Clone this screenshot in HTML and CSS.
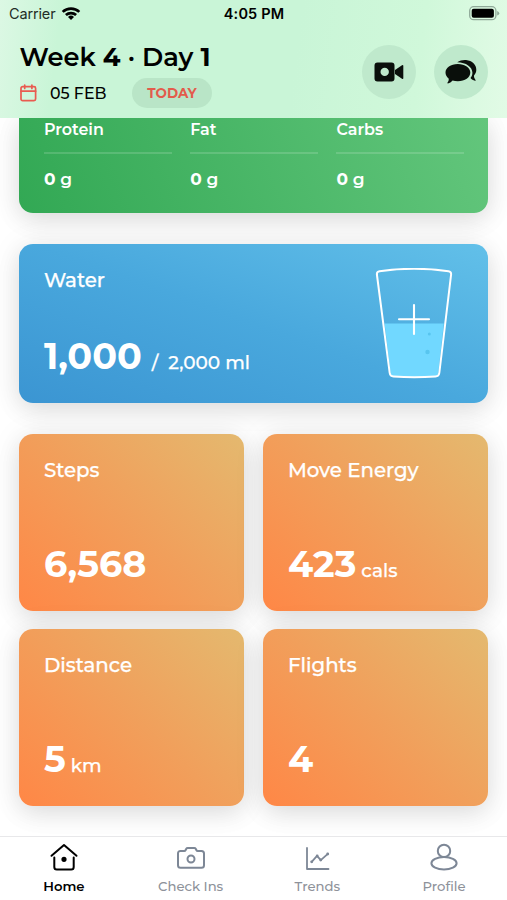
FILE: index.html
```html
<!DOCTYPE html>
<html lang="en">
<head>
<meta charset="utf-8">
<title>Home</title>
<link rel="stylesheet" href="styles.css">
</head>
<body>
<div class="app">
  <header class="header">
    <div class="status">
      <div class="carrier"><span>Carrier</span>
        <svg width="20" height="15" viewBox="0 0 20 15"><g fill="none" stroke="#000" stroke-width="2.7"><path d="M1.7 5.900a12 12 0 0 1 16.600 0"/><path d="M4.900 9.100a7.400 7.400 0 0 1 10.200 0"/></g><path d="M10 14l-3-3a4.300 4.300 0 0 1 6 0z"/></svg>
      </div>
      <time class="clock">4:05 PM</time>
      <svg class="battery" width="31" height="15" viewBox="0 0 31 15"><rect x=".7" y=".7" width="26.2" height="13" rx="4" fill="none" stroke="#8fa998" stroke-width="1.3"/><rect x="2.7" y="2.7" width="22.2" height="9" rx="2" fill="#000"/><path d="M28.2 5v4.600q2-.7 2-2.300t-2-2.300z" fill="#8fa998"/></svg>
    </div>
    <div class="bar">
      <div>
        <h1 class="title">Week <b>4</b> · Day <b>1</b></h1>
        <div class="date-row">
          <svg width="17" height="18" viewBox="0 0 17 18" fill="none" stroke="#e95b50" stroke-width="1.7" stroke-linecap="round"><rect x="1" y="2.700" width="14.600" height="14" rx="1.600"/><path d="M1 7.200h14.600M4.700 1v3.500M11.900 1v3.500"/></svg>
          <span class="date">05 FEB</span>
          <span class="today">TODAY</span>
        </div>
      </div>
      <div class="actions">
        <button class="round" aria-label="Video call"><svg width="30" height="20" viewBox="0 0 30 20" fill="#0a0f0b"><path fill-rule="evenodd" d="M3.500 .5h14a3 3 0 0 1 3 3v13a3 3 0 0 1-3 3h-14a3 3 0 0 1-3-3v-13a3 3 0 0 1 3-3zM10.700 5.700a4.200 4.200 0 1 0 0 8.400a4.200 4.200 0 1 0 0-8.400z"/><path d="M21 8l7-4.700q1.300-.8 1.300.7v12q0 1.500-1.300.7L21 12z"/></svg></button>
        <button class="round" aria-label="Messages"><svg width="32" height="26" viewBox="0 0 32 26" fill="#0a0f0b"><path d="M12.800 5C20 5 25.300 8.700 25.300 13.500S20 22.300 12.800 22.300c-2 0-3.700-.3-5.200-.8-1.300 1.500-3 2.700-4.700 2.900-.6 0-.7-.5-.3-.9 1-1.100 1.400-2.600 1-4C1.700 18 .5 15.900.5 13.500.5 8.700 5.700 5 12.800 5z"/><path d="M12.200 3.300C15 1.600 18 .8 21 1.100c6.200.6 10.500 4.700 10.300 10-.1 2.400-1 4-2.300 5.500-.1 1.600.4 3 1.500 4.300.4.500.1 1-.5.800-1.900-.4-3.400-1.300-4.500-2.700 1.300-1.500 2-3.300 1.900-5.400-.2-5.600-6.100-10.100-15.200-10.300z"/></svg></button>
      </div>
    </div>
  </header>

  <main class="content">
    <section class="card macros">
      <div class="macro"><h3>Protein</h3><p><b>0</b> g</p></div>
      <div class="macro"><h3>Fat</h3><p><b>0</b> g</p></div>
      <div class="macro"><h3>Carbs</h3><p><b>0</b> g</p></div>
    </section>

    <section class="card water">
      <div>
        <h2>Water</h2>
        <p class="value"><b>1,000</b><span class="slash">/</span><span class="goal">2,000 ml</span></p>
      </div>
      <svg width="78" height="112" viewBox="0 0 78 112" fill="none" stroke="#fff" stroke-linecap="round" stroke-linejoin="round"><path d="M9.600 55.500H68.800L63.300 105Q62.800 108.500 59 108.500Q39 110 20 108.500Q16 108.500 15.500 105z" fill="#71d8ff" stroke="none"/><path d="M4.500 3.200Q39 -1.600 73.500 3.200Q76.400 3.600 76.100 6.500L64.300 105Q63.900 108.300 60.500 108.500Q39 110 18.500 108.500Q15.100 108.300 14.700 105L1.900 6.500Q1.600 3.600 4.500 3.200z" stroke-width="2"/><path d="M39 37v29M24 51.300h30" stroke-width="2.100"/><g fill="#58c5ef" stroke="none"><circle cx="54.300" cy="66" r="1.500"/><circle cx="52.500" cy="84" r="2.200"/></g></svg>
    </section>

    <div class="grid">
      <section class="card stat"><h2>Steps</h2><p class="value"><b>6,568</b></p></section>
      <section class="card stat"><h2>Move Energy</h2><p class="value"><b>423</b><span class="unit">cals</span></p></section>
      <section class="card stat"><h2>Distance</h2><p class="value"><b>5</b><span class="unit">km</span></p></section>
      <section class="card stat"><h2>Flights</h2><p class="value"><b>4</b></p></section>
    </div>
  </main>

  <nav class="tabs">
    <a class="tab active"><svg width="28" height="28" viewBox="0 0 28 28"><path d="M1.500 12.800L14 2l12.500 10.800M4.300 14.500v9.500a2.500 2.500 0 0 0 2.500 2.500h14.400a2.500 2.500 0 0 0 2.500-2.500V14.500"/><circle cx="14" cy="16.300" r="1.600" fill="currentColor"/></svg><span>Home</span></a>
    <a class="tab"><svg width="28" height="28" viewBox="0 0 28 28"><path d="M3.500 8h3.700q1 0 1.500-1l.6-1.200q.4-.8 1.500-.8h6.400q1.100 0 1.500.8l.6 1.200q.5 1 1.500 1h3.700q2.500 0 2.500 2.500v11.800q0 2.500-2.500 2.500h-21q-2.500 0-2.500-2.500V10.500Q1 8 3.500 8z"/><circle cx="14" cy="16" r="3.500"/></svg><span>Check Ins</span></a>
    <a class="tab"><svg width="28" height="28" viewBox="0 0 28 28"><path d="M4 5v21h21.500M8.700 18.800l5.300-6 3.800 4.300 7-6.300" stroke-width="1.800"/><g fill="currentColor" stroke="none"><circle cx="8.700" cy="18.800" r="1.400"/><circle cx="14.200" cy="13" r="1.400"/><circle cx="17.700" cy="17" r="1.400"/><circle cx="24.700" cy="11" r="1.400"/></g></svg><span>Trends</span></a>
    <a class="tab"><svg width="28" height="28" viewBox="0 0 28 28"><circle cx="14" cy="7.900" r="6.200"/><ellipse cx="14" cy="20.300" rx="12.600" ry="6.200"/></svg><span>Profile</span></a>
  </nav>
</div>
</body>
</html>
```

FILE: styles.css
```css
* { box-sizing: border-box; }
body { margin: 0; background: #fff; font-family: Montserrat, Inter, "Liberation Sans", sans-serif; }
h1, h2, h3, p { margin: 0; font-weight: 500; }
b { font-weight: 700; }
svg { display: block; flex: none; }
.app { width: 507px; height: 900px; display: flex; flex-direction: column; overflow: hidden; }

.header {
  position: relative; z-index: 2; flex: none; height: 118px;
  background: linear-gradient(97deg, #dcf8e4 0, #c9f5d7 12%, #c9f5d7 58%, #d0f8da 82%, #e2fbe6 100%);
}
.status { display: flex; justify-content: space-between; align-items: center; height: 27px; padding: 0 7px 0 9px; font: 14.500px/27px Inter, sans-serif; }
.carrier { display: flex; align-items: center; gap: 6px; width: 105px; letter-spacing: -.15px; color: #222d25; }
.clock { font-weight: 600; font-size: 14.500px; letter-spacing: .15px; }
.status .battery { margin-left: 75px; }
.bar { display: flex; justify-content: space-between; padding: 15px 19px 0 19.500px; }
.title { font-size: 25.700px; line-height: 30px; font-weight: 600; white-space: nowrap; }
.date-row { display: flex; align-items: center; margin-top: 6px; height: 30px; }
.date { margin-left: 13.500px; width: 82px; font-size: 15.800px; font-weight: 500; white-space: nowrap; }
.today { width: 80px; height: 30px; border-radius: 15px; background: #b9e5c7; color: #e35b4c; font-size: 13.500px; line-height: 30px; font-weight: 700; text-align: center; }
.actions { display: flex; gap: 18px; padding-top: 3px; }
.round { width: 54px; height: 54px; padding: 0; border: 0; border-radius: 50%; background: #bfe9cc; display: flex; align-items: center; justify-content: center; }

.content { flex: 1; padding: 0 18.600px 0 19.400px; color: #fff; }
.card { border-radius: 14px; box-shadow: 0 8px 24px rgba(0, 0, 0, .09), 0 2px 32px rgba(0, 0, 0, .08); }
.macros { display: grid; grid-template-columns: repeat(3, 128px); column-gap: 18.300px; height: 95px; padding: 0 24.500px; border-radius: 0 0 14px 14px; background: linear-gradient(68deg, #32a854, #63c67c); }
.macro h3 { height: 36px; padding-top: 2px; border-bottom: 2px solid rgba(255, 255, 255, .15); font-size: 15.900px; line-height: 20px; font-weight: 600; }
.macro p { margin-top: 15px; font-size: 17px; line-height: 20px; font-weight: 600; }
.water { display: flex; justify-content: space-between; height: 159px; margin-top: 31px; padding: 24px 35px 0 24.500px; background: linear-gradient(20deg, #3b95d2, #49a8dd 50%, #62c0e9); }
.card h2 { font-size: 19.800px; line-height: 24px; font-weight: 500; -webkit-text-stroke: .25px; }
.value { display: flex; align-items: baseline; height: 44px; line-height: 44px; font-size: 18.500px; }
.value b { font-size: 36.600px; }
.value span { -webkit-text-stroke: .25px; }
.water .value { margin-top: 42px; }
.slash { margin-left: 10px; }
.goal { margin-left: 10px; }
.grid { display: grid; grid-template-columns: repeat(2, 225px); gap: 18.500px 19px; margin-top: 30.500px; }
.stat { height: 177px; padding: 24px 24.500px; background: linear-gradient(43deg, #ff8746, #f19f5b 50%, #e4b96f); }
.stat .value { margin-top: 60px; }
.unit { margin-left: 5px; }

.tabs { position: relative; z-index: 1; flex: none; height: 64px; display: grid; grid-template-columns: repeat(4, 126.700px); padding-left: .6px; border-top: 1px solid #e8e8ea; background: #fff; }
.tab { display: flex; flex-direction: column; align-items: center; padding-top: 6px; color: #7d8796; font-size: 13.200px; line-height: 18px; font-weight: 500; }
.tab svg { fill: none; stroke: currentColor; stroke-width: 2; stroke-linecap: round; stroke-linejoin: round; }
.tab span { margin-top: 6px; color: #8e929a; }
.tab.active, .tab.active span { color: #000; font-weight: 600; }
```
